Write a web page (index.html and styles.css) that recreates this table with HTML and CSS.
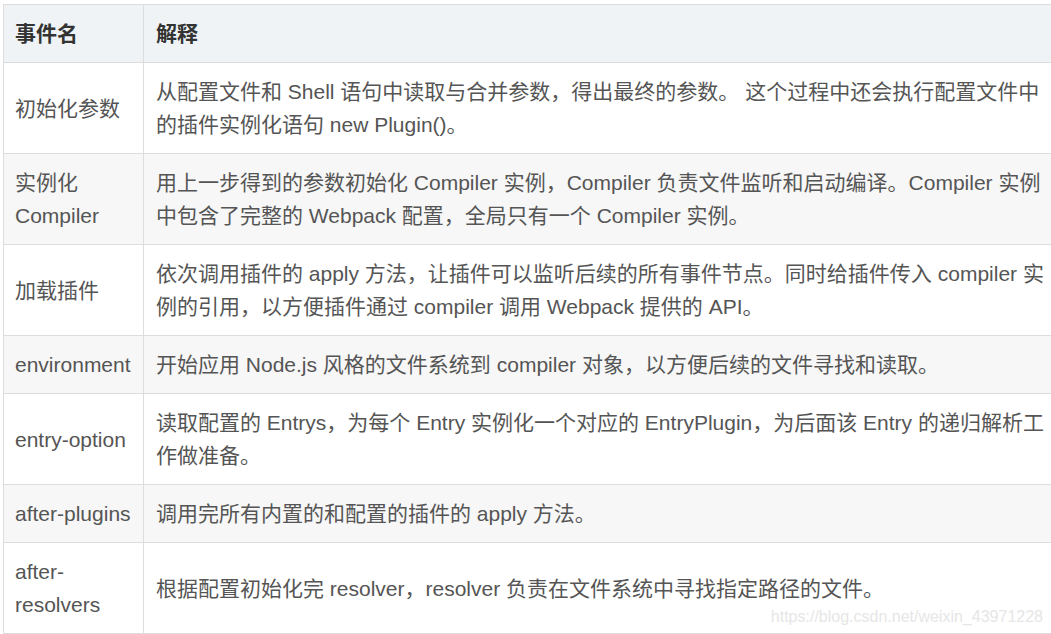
FILE: index.html
```html
<!DOCTYPE html>
<html lang="zh-CN">
<head>
  <meta charset="UTF-8">
  <title>Webpack 事件</title>
  <link rel="stylesheet" href="styles.css">
</head>
<body>
  <div class="wrapper">
    <table class="event-table">
      <colgroup>
        <col class="col-name">
        <col class="col-desc">
      </colgroup>
      <thead>
        <tr>
          <th>事件名</th>
          <th>解释</th>
        </tr>
      </thead>
      <tbody>
        <tr>
          <td>初始化参数</td>
          <td>从配置文件和 Shell 语句中读取与合并参数，得出最终的参数。 这个过程中还会执行配置文件中的插件实例化语句 new Plugin()。</td>
        </tr>
        <tr>
          <td>实例化 Compiler</td>
          <td>用上一步得到的参数初始化 Compiler 实例，Compiler 负责文件监听和启动编译。Compiler 实例中包含了完整的 Webpack 配置，全局只有一个 Compiler 实例。</td>
        </tr>
        <tr>
          <td>加载插件</td>
          <td>依次调用插件的 apply 方法，让插件可以监听后续的所有事件节点。同时给插件传入 compiler 实例的引用，以方便插件通过 compiler 调用 Webpack 提供的 API。</td>
        </tr>
        <tr>
          <td>environment</td>
          <td>开始应用 Node.js 风格的文件系统到 compiler 对象，以方便后续的文件寻找和读取。</td>
        </tr>
        <tr>
          <td>entry-option</td>
          <td>读取配置的 Entrys，为每个 Entry 实例化一个对应的 EntryPlugin，为后面该 Entry 的递归解析工作做准备。</td>
        </tr>
        <tr>
          <td>after-plugins</td>
          <td>调用完所有内置的和配置的插件的 apply 方法。</td>
        </tr>
        <tr>
          <td>after-resolvers</td>
          <td>根据配置初始化完 resolver，resolver 负责在文件系统中寻找指定路径的文件。</td>
        </tr>
      </tbody>
    </table>
    <div class="watermark">https://blog.csdn.net/weixin_43971228</div>
  </div>
</body>
</html>
```

FILE: styles.css
```css
html, body {
  overflow: hidden;
}

body {
  margin: 0;
  padding: 4px 0 0 3px;
  background-color: white;
  font-family: "Liberation Sans", "Noto Sans CJK SC", sans-serif;
  font-size: 21px;
  color: #555555;
}

.wrapper {
  position: relative;
  width: 1066px;
}

.event-table {
  border-collapse: collapse;
  table-layout: fixed;
  width: 1066px;
}

.col-name {
  width: 140px;
}

.event-table th,
.event-table td {
  border: 1px solid #dddddd;
  padding: 12px 11px 12px 11px;
  line-height: 33px;
  text-align: left;
  vertical-align: middle;
}

.event-table td + td,
.event-table th + th {
  padding-left: 12px;
}

.event-table th {
  background-color: #eff3f5;
  color: #333333;
  font-weight: bold;
}

.event-table tbody tr:nth-child(even) {
  background-color: #f7f7f7;
}

.watermark {
  position: absolute;
  right: 26px;
  bottom: 8px;
  font-size: 16px;
  color: #e6e6e6;
  font-family: "Liberation Sans", sans-serif;
}
```
